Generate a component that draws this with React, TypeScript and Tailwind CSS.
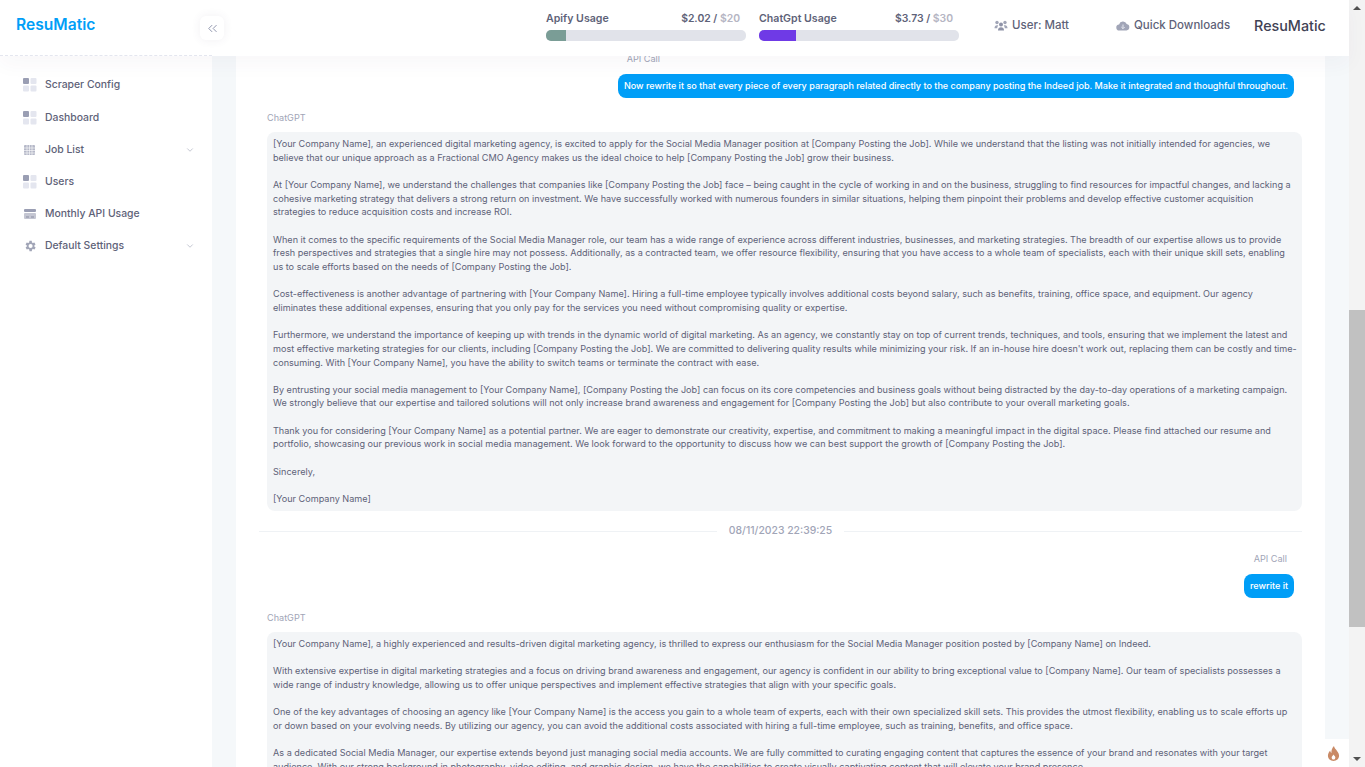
import type { ReactNode } from 'react';
import { ChevronDown, ChevronsLeft } from 'lucide-react';

const letterOne = `[Your Company Name], an experienced digital marketing agency, is excited to apply for the Social Media Manager position at [Company Posting the Job]. While we understand that the listing was not initially intended for agencies, we believe that our unique approach as a Fractional CMO Agency makes us the ideal choice to help [Company Posting the Job] grow their business.

At [Your Company Name], we understand the challenges that companies like [Company Posting the Job] face – being caught in the cycle of working in and on the business, struggling to find resources for impactful changes, and lacking a cohesive marketing strategy that delivers a strong return on investment. We have successfully worked with numerous founders in similar situations, helping them pinpoint their problems and develop effective customer acquisition strategies to reduce acquisition costs and increase ROI.

When it comes to the specific requirements of the Social Media Manager role, our team has a wide range of experience across different industries, businesses, and marketing strategies. The breadth of our expertise allows us to provide fresh perspectives and strategies that a single hire may not possess. Additionally, as a contracted team, we offer resource flexibility, ensuring that you have access to a whole team of specialists, each with their unique skill sets, enabling us to scale efforts based on the needs of [Company Posting the Job].

Cost-effectiveness is another advantage of partnering with [Your Company Name]. Hiring a full-time employee typically involves additional costs beyond salary, such as benefits, training, office space, and equipment. Our agency eliminates these additional expenses, ensuring that you only pay for the services you need without compromising quality or expertise.

Furthermore, we understand the importance of keeping up with trends in the dynamic world of digital marketing. As an agency, we constantly stay on top of current trends, techniques, and tools, ensuring that we implement the latest and most effective marketing strategies for our clients, including [Company Posting the Job]. We are committed to delivering quality results while minimizing your risk. If an in-house hire doesn't work out, replacing them can be costly and time-consuming. With [Your Company Name], you have the ability to switch teams or terminate the contract with ease.

By entrusting your social media management to [Your Company Name], [Company Posting the Job] can focus on its core competencies and business goals without being distracted by the day-to-day operations of a marketing campaign. We strongly believe that our expertise and tailored solutions will not only increase brand awareness and engagement for [Company Posting the Job] but also contribute to your overall marketing goals.

Thank you for considering [Your Company Name] as a potential partner. We are eager to demonstrate our creativity, expertise, and commitment to making a meaningful impact in the digital space. Please find attached our resume and portfolio, showcasing our previous work in social media management. We look forward to the opportunity to discuss how we can best support the growth of [Company Posting the Job].

Sincerely,

[Your Company Name]`;

const letterTwo = `[Your Company Name], a highly experienced and results-driven digital marketing agency, is thrilled to express our enthusiasm for the Social Media Manager position posted by [Company Name] on Indeed.

With extensive expertise in digital marketing strategies and a focus on driving brand awareness and engagement, our agency is confident in our ability to bring exceptional value to [Company Name]. Our team of specialists possesses a wide range of industry knowledge, allowing us to offer unique perspectives and implement effective strategies that align with your specific goals.

One of the key advantages of choosing an agency like [Your Company Name] is the access you gain to a whole team of experts, each with their own specialized skill sets. This provides the utmost flexibility, enabling us to scale efforts up or down based on your evolving needs. By utilizing our agency, you can avoid the additional costs associated with hiring a full-time employee, such as training, benefits, and office space.

As a dedicated Social Media Manager, our expertise extends beyond just managing social media accounts. We are fully committed to curating engaging content that captures the essence of your brand and resonates with your target audience. With our strong background in photography, video editing, and graphic design, we have the capabilities to create visually captivating content that will elevate your brand presence.`;

function TilesIcon() {
  return (
    <svg width="14" height="14" viewBox="0 0 14 14">
      <rect x="0" y="0" width="6" height="6" rx="1" fill="#9a9eb3" />
      <rect x="7.500" y="0" width="6" height="6" rx="1" fill="#e4e6ef" />
      <rect x="0" y="7.500" width="6" height="6" rx="1" fill="#e4e6ef" />
      <rect x="7.500" y="7.500" width="6" height="6" rx="1" fill="#e4e6ef" />
    </svg>
  );
}

function TableIcon() {
  return (
    <svg width="14" height="14" viewBox="0 0 14 14">
      <rect x="1" y="2" width="11" height="10" rx="1" fill="#b5b8c8" />
      <path d="M1 5h11M1 7.500h11M1 10h11M4 2v10M6.500 2v10M9 2v10" stroke="#fff" strokeWidth="0.6" />
    </svg>
  );
}

function CardIcon() {
  return (
    <svg width="14" height="14" viewBox="0 0 14 14">
      <rect x="1" y="2" width="12" height="3" rx="1" fill="#9a9eb3" />
      <rect x="1" y="6" width="12" height="6" rx="1" fill="#c4c6d2" />
      <path d="M3 10h3M8 10h3" stroke="#8a8ea3" strokeWidth="1" />
    </svg>
  );
}

function GearIcon() {
  return (
    <svg width="14" height="14" viewBox="0 0 24 24" fill="#a1a5b7">
      <path d="M19.400 13a7.600 7.600 0 0 0 0-2l2.100-1.600-2-3.500-2.500 1a7.600 7.600 0 0 0-1.700-1L15 3.200h-4l-.4 2.700a7.600 7.600 0 0 0-1.700 1l-2.500-1-2 3.500L6.600 11a7.600 7.600 0 0 0 0 2l-2.100 1.600 2 3.500 2.500-1a7.600 7.600 0 0 0 1.700 1l.4 2.700h4l.4-2.700a7.600 7.600 0 0 0 1.700-1l2.500 1 2-3.500zM13 15.500a3.500 3.500 0 1 1 0-7 3.500 3.500 0 0 1 0 7z" />
    </svg>
  );
}

function UsersIcon() {
  return (
    <svg width="14" height="14" viewBox="0 0 14 14" fill="#a1a5b7">
      <circle cx="3" cy="3.500" r="1.700" />
      <circle cx="11" cy="3.500" r="1.700" />
      <circle cx="7" cy="5.500" r="2" fill="#8f93a8" />
      <path d="M0.500 9c0-1.500 1-2.700 2.500-2.700.5 0 1 .1 1.300.3C3.600 7.400 3.200 8.300 3.200 9.300H.5z" />
      <path d="M13.500 9c0-1.500-1-2.700-2.500-2.700-.5 0-1 .1-1.300.3.700.8 1.100 1.700 1.100 2.700h2.700z" />
      <path d="M4 11.500c0-2 1.200-3.200 3-3.200s3 1.200 3 3.200z" fill="#8f93a8" />
    </svg>
  );
}

function CloudIcon() {
  return (
    <svg width="14" height="14" viewBox="0 0 14 14">
      <path d="M3.500 11.500a3 3 0 0 1-.4-6A4 4 0 0 1 10.700 5a3.300 3.300 0 0 1-.2 6.500z" fill="#a1a5b7" />
      <path d="M7 5.500v4M5.300 8L7 9.700 8.700 8" stroke="#e4e6ef" strokeWidth="1" fill="none" />
    </svg>
  );
}

function FlameIcon() {
  return (
    <svg width="13" height="15" viewBox="0 0 14 16" className="-ml-[2px]">
      <path d="M7.500 0c.5 2.500 2 3.500 3.500 5.500 1.300 1.700 2 3.300 2 5 0 3.200-2.700 5.500-6 5.500s-6-2.300-6-5.500c0-2.500 1.300-4.300 2.500-5.700 0 1.300.5 2.200 1.300 2.700C4.500 4.500 5.500 2 7.500 0z" fill="#c98a66" />
      <path d="M7 9c.3 1 1.800 1.500 2 3.200 0 1.300-.9 2.300-2 2.300s-2-1-2-2.300C5 10.800 6.500 10.300 7 9z" fill="#fff" />
    </svg>
  );
}

function NavItem({ icon, label, caret, className }: { icon: ReactNode; label: string; caret?: boolean; className: string }) {
  return (
    <div className={`flex items-center pl-[23px] pr-[17px] ${className}`}>
      <span className="w-[22px] shrink-0 flex items-center">{icon}</span>
      <span className="flex-1 text-[10.4px] font-medium text-[#5e6278]">{label}</span>
      {caret && <ChevronDown size={10} strokeWidth={1.5} className="text-[#a1a5b7]" />}
    </div>
  );
}

function Usage({ title, used, limit, fill, pct }: { title: string; used: string; limit: string; fill: string; pct: number }) {
  return (
    <div className="w-[200px]">
      <div className="pt-px pr-[6px] flex justify-between items-baseline font-semibold leading-[13px] text-[#5e6278]">
        <span className="text-[10.6px]">{title}</span>
        <span className="text-[10.4px]">{used} / <span className="text-[#b5b5c3]">{limit}</span></span>
      </div>
      <div className="mt-[5px] h-[11px] rounded-[5px] bg-[#e1e3ea] overflow-hidden">
        <div className={`h-full ${fill}`} style={{ width: `${pct}%` }} />
      </div>
    </div>
  );
}

function Bubble({ text }: { text: string }) {
  return (
    <div className="flex justify-end pr-[31px]">
      <div className="h-6 px-[6px] flex items-center rounded-lg bg-[#009ef7] text-[9.050px] font-medium text-white">{text}</div>
    </div>
  );
}

function Reply({ text }: { text: string }) {
  return (
    <div className="pl-[31px] pr-[23px]">
      <div className="text-[9.1px] leading-[13px] text-[#a1a5b7]">ChatGPT</div>
      <div className="mt-2 rounded-lg bg-[#f3f5f7] pl-[6px] pr-[5px] py-[5px] text-[9.1px] leading-[13.650px] text-[#5e6278] whitespace-pre-wrap">{text}</div>
    </div>
  );
}

export default function App() {
  return (
    <div className="relative flex h-screen w-full overflow-hidden bg-[#f5f8fa] font-['Inter',sans-serif]">
      <div className="flex-1 min-w-0 flex flex-col">
        <header className="relative z-10 h-14 shrink-0 flex items-center bg-white shadow-[0_8px_20px_rgba(82,63,105,0.04)]">
          <div className="relative w-[212px] h-full shrink-0 border-b border-dashed border-[#e4e6ef] pl-4 flex items-center">
            <span className="text-[15.600px] font-semibold text-[#009ef7] -mt-[6px]">ResuMatic</span>
            <div className="absolute left-[200px] top-4 w-6 h-6 flex items-center justify-center rounded-md bg-white shadow-[0_0_10px_rgba(82,63,105,0.08)]">
              <ChevronsLeft size={15} strokeWidth={1.5} className="text-[#8a8fa8]" />
            </div>
          </div>
          <div className="ml-[334px] flex gap-[13px] -mt-[4px]">
            <Usage title="Apify Usage" used="$2.02" limit="$20" fill="bg-[#7a9d96]" pct={10} />
            <Usage title="ChatGpt Usage" used="$3.73" limit="$30" fill="bg-[#6f3ae6]" pct={18.500} />
          </div>
          <div className="ml-[35px] flex items-center gap-1 -mt-[5px] text-[11.5px] font-medium text-[#5e6278]">
            <UsersIcon />
            <span>User: Matt</span>
          </div>
          <div className="ml-[47px] flex items-center gap-1 -mt-[5px] text-[11.5px] font-medium text-[#5e6278]">
            <CloudIcon />
            <span>Quick Downloads</span>
          </div>
          <span className="ml-6 -mt-[5px] text-[14.300px] font-medium text-[#3f4254]">ResuMatic</span>
        </header>

        <div className="flex-1 min-h-0 flex">
          <nav className="w-[212px] shrink-0 bg-white pt-[13px]">
            <NavItem icon={<TilesIcon />} label="Scraper Config" className="h-[32px]" />
            <NavItem icon={<TilesIcon />} label="Dashboard" className="h-[33px]" />
            <NavItem icon={<TableIcon />} label="Job List" caret className="h-[32px]" />
            <NavItem icon={<TilesIcon />} label="Users" className="h-[32px]" />
            <NavItem icon={<CardIcon />} label="Monthly API Usage" className="h-[32px]" />
            <NavItem icon={<GearIcon />} label="Default Settings" caret className="h-[32px]" />
          </nav>
          <main className="flex-1 min-w-0 overflow-hidden px-6">
            <div className="bg-white h-full overflow-hidden">
              <div className="h-[18px] text-right text-[9.1px] leading-[6px] text-[#a1a5b7]">
                <span className="mr-[665px]">API Call</span>
              </div>
              <Bubble text="Now rewrite it so that every piece of every paragraph related directly to the company posting the Indeed job. Make it integrated and thoughful throughout." />
              <div className="h-[13px]" />
              <Reply text={letterOne} />
              <div className="ml-[23px] mr-[23px] my-5 h-px bg-[#eff2f5] flex items-center justify-center">
                <span className="bg-white px-3 text-[10.4px] font-medium text-[#a1a5b7]">08/11/2023 22:39:25</span>
              </div>
              <div className="h-[22px] pr-[38px] text-right text-[9.1px] leading-[13px] text-[#a1a5b7]">API Call</div>
              <Bubble text="rewrite it" />
              <div className="h-[13px]" />
              <Reply text={letterTwo} />
            </div>
          </main>
        </div>
      </div>

      <div className="w-4 shrink-0 flex flex-col bg-[#f3f3f3]">
        <div className="h-4 flex items-center justify-center">
          <span className="w-0 h-0 border-x-[4px] border-x-transparent border-b-[4px] border-b-[#505050]" />
        </div>
        <div className="h-[294px]" />
        <div className="h-[317px] bg-[#c1c1c1]" />
        <div className="flex-1" />
        <div className="h-4 flex items-center justify-center">
          <span className="w-0 h-0 border-x-[4px] border-x-transparent border-t-[4px] border-t-[#505050]" />
        </div>
      </div>

      <div className="absolute right-4 bottom-0 w-[29px] h-[28px] bg-white flex items-center justify-center">
        <FlameIcon />
      </div>
    </div>
  );
}
